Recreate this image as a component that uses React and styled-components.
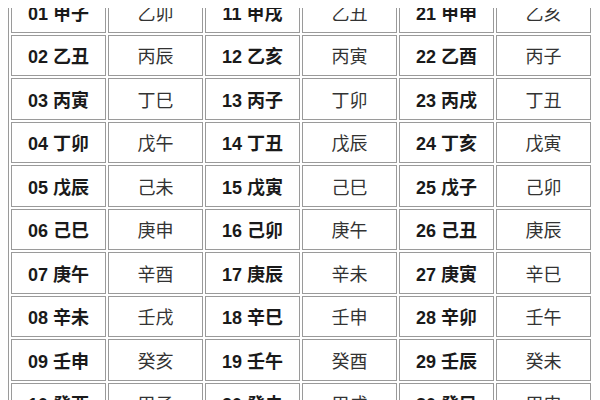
import React from 'react';
import styled, { createGlobalStyle } from 'styled-components';

const GlobalStyle = createGlobalStyle`
  body {
    margin: 8px;
    background: #ffffff;
    font-family: "Liberation Sans", "Noto Sans CJK SC", sans-serif;
    overflow: hidden;
  }
`;

const Table = styled.table`
  width: 586px;
  margin-top: -20px;
  table-layout: fixed;
  border-collapse: separate;
  border-spacing: 2px;
  border: 1px solid #9a9a9a;
  background: #ffffff;
`;

const Cell = styled.td`
  height: 39.5px;
  padding: 0;
  border: 1px solid #9a9a9a;
  text-align: center;
  vertical-align: middle;
  font-size: 18px;
  font-weight: ${(p) => (p.$head ? 700 : 400)};
  color: ${(p) => (p.$head ? '#1a1a1a' : '#333333')};
  white-space: nowrap;
`;

const stems = '甲乙丙丁戊己庚辛壬癸';
const branches = '子丑寅卯辰巳午未申酉戌亥';

function ganzhi(n) {
  // n is 1-based position in the sixty cycle
  const i = ((n - 1) % 60 + 60) % 60;
  return stems[i % 10] + branches[i % 12];
}

const rows = Array.from({ length: 10 }, (_, r) => r);
const groups = [0, 10, 20];

function App() {
  return (
    <>
      <GlobalStyle />
      <Table>
        <tbody>
          {rows.map((r) => (
            <tr key={r}>
              {groups.map((g) => {
                const n = g + r + 1;
                const label = String(n).padStart(2, '0');
                return (
                  <React.Fragment key={g}>
                    <Cell $head>{label} {ganzhi(n)}</Cell>
                    <Cell>{ganzhi(n + 51)}</Cell>
                  </React.Fragment>
                );
              })}
            </tr>
          ))}
        </tbody>
      </Table>
    </>
  );
}

export default App;
